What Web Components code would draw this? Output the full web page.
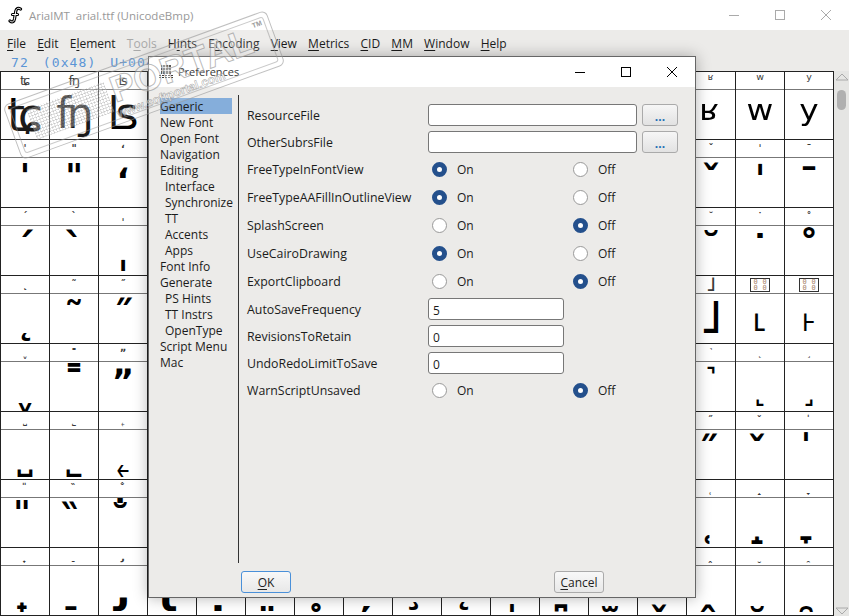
<!DOCTYPE html>
<html>
<head>
<meta charset="utf-8">
<title>Preferences</title>
<style>
  html, body { margin: 0; height: 100%; overflow: hidden; }
  body { font-family: "Open Sans", "Liberation Sans", sans-serif; font-size: 12px; }
</style>
</head>
<body>
<ff-app></ff-app>
<script>
// marks need a base or the shaper adds a dotted circle
const m = (c) => "\u00A0" + c;
// font view glyphs: [char, top offset, size, weight, label size]
const LEFT = [
  [["ʨ", 2, 46, 400, 13], ["ʩ", 3, 42, 400, 13], ["ʪ", 2, 44, 400, 13]],
  [["'", 1, 34], ['"', 1, 34], ["ʻ", 5, 34]],
  [["ˊ", 2], ["ˋ", 2], ["ˌ", 8]],
  [["˛", 5], ["˜", 3], ["˝", 2]],
  [["ˬ", 6], ["˭", 1], ["ˮ", 2, 34]],
  [["˽", 5], ["˾", 5], ["˿", 4]],
  [[m("\u030E"), 2], [m("\u030F"), 2], [m("\u0310"), 2]],
  [[m("\u031F"), 2], [m("\u0320"), 2], [m("\u0321"), 2]],
];
const RIGHT = [
  [["ʶ", 3, 52, 400, 15], ["ʷ", 3, 52, 400, 15], ["ʸ", 3, 52, 400, 15]],
  [["ˇ", 3], ["ˈ", 3], ["ˉ", 5]],
  [["˘", 2], ["˙", 5], ["˚", 3]],
  [["˩", -1, 46, 700, 20], ["˪", 3, 40, 400, 0], ["˫", 3, 40, 400, 0]],
  [["˺", 0], ["˻", 2], ["˼", 2]],
  [[m("\u030B"), 2], [m("\u030C"), 2], [m("\u030D"), 2]],
  [[m("\u031C"), 2], [m("\u031D"), 2], [m("\u031E"), 2]],
  [[m("\u032D"), 2], [m("\u032E"), 2], [m("\u032F"), 2]],
];
const BOTTOM = ["\u0322", "\u0323", "\u0324", "\u0325", "\u0326", "\u0327", "\u0328", "\u0329", "\u032A", "\u032B", "\u032C"];

const cellTpl = document.createElement("template");
cellTpl.innerHTML = `
  <style>
    :host { display: block; border-right: 1px solid #222; border-bottom: 1px solid #222; box-sizing: border-box; height: 68px; background: #fff; overflow: hidden; }
    .label { height: 17px; border-bottom: 1px solid #777; text-align: center; font: 700 10px/17px "DejaVu Sans", sans-serif; color: #3a3a3a; overflow: hidden; }
    .big { height: 49px; text-align: center; font-family: "DejaVu Sans", sans-serif; color: #000; line-height: 1; overflow: hidden; box-sizing: border-box; white-space: pre; }
    .miss { display: grid; grid-template-columns: 1fr 1fr; width: 20px; height: 14px; margin: 2px auto 0; box-sizing: border-box; border: 1px solid #333; font: 7px/6px "DejaVu Sans Mono", monospace; color: #a9856a; }
  </style>
  <div class="label"></div>
  <div class="big"></div>
`;
class FontCell extends HTMLElement {
  constructor() {
    super();
    this.attachShadow({ mode: "open" }).appendChild(cellTpl.content.cloneNode(true));
  }
  connectedCallback() {
    const big = this.shadowRoot.querySelector(".big");
    const label = this.shadowRoot.querySelector(".label");
    const ls = this.getAttribute("lsize");
    if (ls === "0") {
      label.innerHTML = `<div class="miss"><span>0</span><span>0</span><span>0</span><span>0</span></div>`;
    } else {
      label.textContent = this.getAttribute("ch");
      if (ls) label.style.fontSize = ls + "px";
      if (ls) label.style.fontWeight = this.getAttribute("weight") || 700;
    }
    big.textContent = this.getAttribute("ch");
    big.style.paddingTop = (this.getAttribute("top") || 0) + "px";
    big.style.fontSize = (this.getAttribute("size") || 40) + "px";
    big.style.fontWeight = this.getAttribute("weight") || 700;
  }
}
customElements.define("font-cell", FontCell);

const gridTpl = document.createElement("template");
gridTpl.innerHTML = `
  <style>
    :host { display: grid; grid-template-columns: repeat(17, 49px); grid-auto-rows: 68px; border-top: 1px solid #222; border-left: 1px solid #222; width: 834px; flex: none; box-sizing: border-box; }
  </style>
`;
class FontGrid extends HTMLElement {
  constructor() {
    super();
    const root = this.attachShadow({ mode: "open" });
    root.appendChild(gridTpl.content.cloneNode(true));
    for (let r = 0; r < 8; r++) {
      for (let c = 0; c < 17; c++) {
        let g = [""];
        if (c < 3) g = LEFT[r][c];
        else if (c >= 14) g = RIGHT[r][c - 14];
        else if (r == 7) g = [m(BOTTOM[c - 3]), 2];
        const cell = document.createElement("font-cell");
        cell.setAttribute("ch", g[0]);
        if (g[1] !== undefined) cell.setAttribute("top", g[1]);
        if (g[2]) cell.setAttribute("size", g[2]);
        if (g[3]) cell.setAttribute("weight", g[3]);
        if (g[4] !== undefined) cell.setAttribute("lsize", g[4]);
        root.appendChild(cell);
      }
    }
  }
}
customElements.define("font-grid", FontGrid);

class PrefRow extends HTMLElement {
  constructor() {
    super();
    this.attachShadow({ mode: "open" }).innerHTML = `
      <style>
        :host { display: grid; grid-template-columns: 181px 209px 5px 36px; align-items: center; height: var(--h, 27px); color: #1b1b1b; }
        #name { font-size: 12.35px; white-space: nowrap; }
        :host([kind=file]) #name, :host([kind=num]) #name { padding-top: 2px; }
        .radios { grid-column: 2 / 5; display: grid; grid-template-columns: 141px 1fr; padding-left: 4px; }
        .r { display: flex; align-items: center; gap: 10px; }
        .o { width: 15px; height: 15px; border-radius: 50%; box-sizing: border-box; border: 1px solid #999; background: #fff; }
        .o.on { border: 5px solid #24508c; background: #fff; }
        .in { height: 22px; box-sizing: border-box; border: 1px solid #777; border-radius: 3px; background: #fff; padding-left: 4px; line-height: 23px; }
        .b { grid-column: 4; height: 22px; box-sizing: border-box; border: 1px solid #aaa; border-radius: 3px; background: linear-gradient(#f6f6f6, #e2e2e2); color: #1c6fb5; text-align: center; line-height: 24px; font-weight: 700; }
      </style>
      <div id="name"><slot></slot></div>
    `;
  }
  connectedCallback() {
    const root = this.shadowRoot;
    const kind = this.getAttribute("kind");
    if (kind == "file") {
      root.innerHTML += `<div class="in"></div><div></div><div class="b">...</div>`;
    } else if (kind == "num") {
      root.innerHTML += `<div class="in" style="width:136px">${this.getAttribute("value")}</div>`;
    } else {
      const on = this.getAttribute("value") == "on";
      root.innerHTML += `<div class="radios">
        <div class="r"><div class="o ${on ? "on" : ""}"></div>On</div>
        <div class="r"><div class="o ${on ? "" : "on"}"></div>Off</div>
      </div>`;
    }
  }
}
customElements.define("pref-row", PrefRow);

const dialogTpl = document.createElement("template");
dialogTpl.innerHTML = `
  <style>
    :host { position: absolute; left: 148px; top: 56px; width: 548px; height: 542px; box-sizing: border-box; border: 1px solid #666; background: #ecebe9; box-shadow: 0 0 14px rgba(0,0,0,.3); display: flex; flex-direction: column; }
    .title { height: 30px; flex: none; background: #fff; display: flex; align-items: center; padding-left: 10px; color: #222; font-size: 11px; }
    .title svg.ic { margin-right: 5px; margin-bottom: 1px; }
    .title .t { margin-bottom: 2px; }
    .ctl { margin-left: auto; display: flex; }
    .ctl span { width: 46px; height: 30px; display: flex; align-items: center; justify-content: center; }
    .main { flex: 1; display: flex; min-height: 0; padding-top: 8px; }
    .list { width: 78px; flex: none; margin-top: 3px; padding-left: 11px; }
    .list div { height: 16px; line-height: 18px; color: #1b1b1b; white-space: nowrap; }
    .list .sub { padding-left: 5px; }
    .list .sel { background: #85aedb; width: 72px; }
    .sep { width: 1px; background: #333; flex: none; height: 468px; }
    .form { padding: 6px 0 0 8px; }
    .foot { height: 35px; flex: none; display: flex; padding-top: 9px; box-sizing: border-box; }
    .btn { box-sizing: border-box; width: 50px; height: 22px; border: 1px solid #aaa; border-radius: 3px; background: linear-gradient(#f8f8f8, #e8e8e8); text-align: center; line-height: 21px; color: #222; }
    .btn.def { border: 1px solid #4a90d9; margin-left: 92px; }
    .btn.can { margin-left: 263px; }
    u { text-underline-offset: 2px; }
  </style>
  <div class="title">
    <svg class="ic" width="14" height="14" viewBox="0 0 14 14">
      <path d="M2 0h10v9H2z" fill="#444"/>
      <path d="M3.500 0v9M6.500 0v9M9.500 0v9M2 2.500h10M2 5.500h10" stroke="#fff" stroke-width=".7"/>
      <path d="M0 10.500h14M0 12.500h14" stroke="#222" stroke-dasharray="2 1"/>
    </svg>
    <span class="t">Preferences</span>
    <div class="ctl">
      <span><svg width="12" height="12"><path d="M1 6.500h10" stroke="#000"/></svg></span>
      <span><svg width="12" height="12"><rect x="1.500" y="1.500" width="9" height="9" fill="none" stroke="#000"/></svg></span>
      <span><svg width="12" height="12"><path d="M1 1l10 10M11 1L1 11" stroke="#000"/></svg></span>
    </div>
  </div>
  <div class="main">
    <div class="list">
      <div class="sel">Generic</div><div>New Font</div><div>Open Font</div><div>Navigation</div><div>Editing</div>
      <div class="sub">Interface</div><div class="sub">Synchronize</div><div class="sub">TT</div><div class="sub">Accents</div><div class="sub">Apps</div>
      <div>Font Info</div><div>Generate</div>
      <div class="sub">PS Hints</div><div class="sub">TT Instrs</div><div class="sub">OpenType</div>
      <div>Script Menu</div><div>Mac</div>
    </div>
    <div class="sep"></div>
    <div class="form">
      <pref-row kind="file">ResourceFile</pref-row>
      <pref-row kind="file">OtherSubrsFile</pref-row>
      <pref-row kind="radio" value="on" style="--h:28px">FreeTypeInFontView</pref-row>
      <pref-row kind="radio" value="on" style="--h:28px">FreeTypeAAFillInOutlineView</pref-row>
      <pref-row kind="radio" value="off" style="--h:28px">SplashScreen</pref-row>
      <pref-row kind="radio" value="on" style="--h:28px">UseCairoDrawing</pref-row>
      <pref-row kind="radio" value="off" style="--h:28px">ExportClipboard</pref-row>
      <pref-row kind="num" value="5">AutoSaveFrequency</pref-row>
      <pref-row kind="num" value="0">RevisionsToRetain</pref-row>
      <pref-row kind="num" value="0">UndoRedoLimitToSave</pref-row>
      <pref-row kind="radio" value="off" style="--h:29px">WarnScriptUnsaved</pref-row>
    </div>
  </div>
  <div class="foot">
    <div class="btn def"><u>O</u>K</div>
    <div class="btn can"><u>C</u>ancel</div>
  </div>
`;
class PrefDialog extends HTMLElement {
  constructor() {
    super();
    this.attachShadow({ mode: "open" }).appendChild(dialogTpl.content.cloneNode(true));
  }
}
customElements.define("pref-dialog", PrefDialog);

const stampTpl = document.createElement("template");
stampTpl.innerHTML = `
  <style>
    :host { position: absolute; left: 4px; top: 56px; width: 280px; height: 58px; transform: rotate(-20deg); box-sizing: border-box; border: 1px solid rgba(150,150,150,.6); border-radius: 6px; background: rgba(255,255,255,.1); pointer-events: none; font-family: "Liberation Sans", sans-serif; }
    .in { position: absolute; inset: 4px; border: 1px solid rgba(150,150,150,.5); border-radius: 3px; }
    .mesh { position: absolute; left: 20px; top: 11px; width: 82px; height: 32px; background: repeating-linear-gradient(0deg, rgba(150,150,150,.3) 0 1px, rgba(255,255,255,.22) 1px 3px), repeating-linear-gradient(90deg, rgba(150,150,150,.3) 0 1px, rgba(255,255,255,.1) 1px 3px); }
    .p { position: absolute; left: 106px; top: 3px; font-size: 37px; line-height: 40px; font-weight: 700; color: rgba(255,255,255,.4); -webkit-text-stroke: 1px rgba(140,140,140,.6); }
    .u { position: absolute; left: 104px; top: 40px; font-size: 12px; line-height: 13px; color: rgba(255,255,255,.5); -webkit-text-stroke: .5px rgba(130,130,130,.75); font-weight: 700; white-space: nowrap; }
    .t { position: absolute; right: 7px; top: 6px; font-size: 7px; color: rgba(130,130,130,.8); font-weight: 700; }
  </style>
  <div class="in"></div>
  <div class="mesh"></div>
  <span class="p">PORTAL</span>
  <span class="u">www.softportal.com</span>
  <span class="t">TM</span>
`;
class SoftStamp extends HTMLElement {
  constructor() {
    super();
    this.attachShadow({ mode: "open" }).appendChild(stampTpl.content.cloneNode(true));
  }
}
customElements.define("soft-stamp", SoftStamp);

const appTpl = document.createElement("template");
appTpl.innerHTML = `
  <style>
    :host { display: flex; flex-direction: column; position: relative; width: 849px; height: 616px; background: #ecebe9; overflow: hidden; color: #1b1b1b; }
    .bar { height: 30px; flex: none; background: #fff; display: flex; align-items: center; padding-left: 7px; color: #999; font-size: 11.5px; }
    .bar svg.logo { margin-right: 6px; }
    .ctl { margin-left: auto; display: flex; }
    .ctl span { width: 46px; height: 30px; display: flex; align-items: center; justify-content: center; }
    .menu { height: 24px; flex: none; display: flex; gap: 11.2px; padding-left: 7px; align-items: center; color: #1b1b1b; margin-top: 1px; }
    .menu .off { color: #aaa; }
    u { text-underline-offset: 2px; }
    .info { height: 16px; flex: none; padding-left: 11px; font: 13px/16px "DejaVu Sans Mono", monospace; letter-spacing: 1.1px; word-spacing: 5px; color: #5b95d6; white-space: pre; overflow: hidden; }
    .view { flex: 1; display: flex; min-height: 0; }
    .sb { width: 15px; flex: none; background: #e5e5e3; display: flex; flex-direction: column; align-items: center; }
    .thumb { width: 9px; height: 20px; margin-top: 9px; background: #b0b0b0; border-radius: 5px; }
    .sb svg { flex: none; margin-top: 2px; }
    .sb .down { margin-top: auto; margin-bottom: 1px; }
  </style>
  <div class="bar">
    <svg class="logo" width="16" height="18" viewBox="0 0 16 18">
      <g fill="none" stroke-linecap="round">
        <path d="M3 15c2.500 2 4 .5 4.500-2l1.300-8c.5-2.500 2.500-3.500 4.700-2M5.500 8.500h5" stroke="#000" stroke-width="3.200"/>
        <path d="M3 15c2.500 2 4 .5 4.500-2l1.300-8c.5-2.500 2.500-3.500 4.700-2M5.500 8.500h5" stroke="#fff" stroke-width="1"/>
      </g>
    </svg>
    ArialMT&nbsp; arial.ttf (UnicodeBmp)
    <div class="ctl">
      <span><svg width="12" height="12"><path d="M1 6.500h10" stroke="#aaa"/></svg></span>
      <span><svg width="12" height="12"><rect x="1.500" y="1.500" width="9" height="9" fill="none" stroke="#aaa"/></svg></span>
      <span><svg width="12" height="12"><path d="M1 1l10 10M11 1L1 11" stroke="#aaa"/></svg></span>
    </div>
  </div>
  <div class="menu">
    <span><u>F</u>ile</span><span><u>E</u>dit</span><span>E<u>l</u>ement</span><span class="off">T<u>o</u>ols</span><span>H<u>i</u>nts</span><span>E<u>n</u>coding</span><span><u>V</u>iew</span><span><u>M</u>etrics</span><span><u>C</u>ID</span><span><u>M</u>M</span><span><u>W</u>indow</span><span><u>H</u>elp</span>
  </div>
  <div class="info">72 (0x48) U+0048</div>
  <div class="view">
    <font-grid></font-grid>
    <div class="sb">
      <svg width="14" height="8"><path d="M1 7l6-6 6 6z" fill="none" stroke="#aaa"/></svg>
      <div class="thumb"></div>
      <svg class="down" width="14" height="8"><path d="M1 1l6 6 6-6z" fill="none" stroke="#aaa"/></svg>
    </div>
  </div>
  <pref-dialog></pref-dialog>
  <soft-stamp></soft-stamp>
`;
class FfApp extends HTMLElement {
  constructor() {
    super();
    this.attachShadow({ mode: "open" }).appendChild(appTpl.content.cloneNode(true));
  }
}
customElements.define("ff-app", FfApp);
</script>
</body>
</html>
